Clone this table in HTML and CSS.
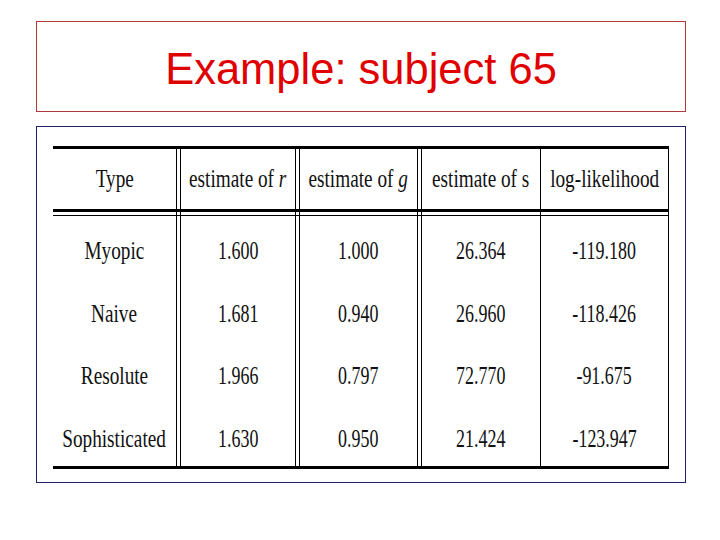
FILE: index.html
```html
<!DOCTYPE html>
<html>
<head>
<meta charset="utf-8">
<link rel="stylesheet" href="styles.css">
</head>
<body>
<div class="page">
  <div class="title-box"><h1 class="title">Example: subject 65</h1></div>
  <div class="frame">
    <div class="tbl">
      <div class="row head">
        <div class="cell c1"><span class="t">Type</span></div>
        <div class="cell c2"><span class="t">estimate of <i>r</i></span></div>
        <div class="cell c3"><span class="t">estimate of <i>g</i></span></div>
        <div class="cell c4"><span class="t">estimate of s</span></div>
        <div class="cell c5"><span class="t">log-likelihood</span></div>
      </div>
      <div class="rule"></div>
      <div class="row body">
        <div class="cell c1"><span class="t">Myopic</span></div>
        <div class="cell c2"><span class="n">1.600</span></div>
        <div class="cell c3"><span class="n">1.000</span></div>
        <div class="cell c4"><span class="n">26.364</span></div>
        <div class="cell c5"><span class="n">-119.180</span></div>
      </div>
      <div class="row body">
        <div class="cell c1"><span class="t">Naive</span></div>
        <div class="cell c2"><span class="n">1.681</span></div>
        <div class="cell c3"><span class="n">0.940</span></div>
        <div class="cell c4"><span class="n">26.960</span></div>
        <div class="cell c5"><span class="n">-118.426</span></div>
      </div>
      <div class="row body">
        <div class="cell c1"><span class="t">Resolute</span></div>
        <div class="cell c2"><span class="n">1.966</span></div>
        <div class="cell c3"><span class="n">0.797</span></div>
        <div class="cell c4"><span class="n">72.770</span></div>
        <div class="cell c5"><span class="n">-91.675</span></div>
      </div>
      <div class="row body">
        <div class="cell c1"><span class="t">Sophisticated</span></div>
        <div class="cell c2"><span class="n">1.630</span></div>
        <div class="cell c3"><span class="n">0.950</span></div>
        <div class="cell c4"><span class="n">21.424</span></div>
        <div class="cell c5"><span class="n">-123.947</span></div>
      </div>
    </div>
  </div>
</div>
</body>
</html>
```
FILE: styles.css
```css
html, body {
  margin: 0;
  padding: 0;
  background: #ffffff;
}
.page {
  padding: 21px 0 0 36px;
}
.title-box {
  box-sizing: border-box;
  width: 650px;
  height: 91px;
  border: 1px solid #b03a3a;
  display: flex;
  align-items: center;
  justify-content: center;
  padding-top: 4px;
}
.title {
  margin: 0;
  font-family: "Liberation Sans", Arial, sans-serif;
  font-weight: normal;
  font-size: 43.5px;
  line-height: 50px;
  color: #e00000;
}
.frame {
  box-sizing: border-box;
  width: 650px;
  margin-top: 14px;
  border: 1px solid #1f1f6a;
  padding: 19px 0 13px 16px;
}
.tbl {
  width: 616px;
  border-top: 3px solid #000;
  border-bottom: 3px solid #000;
  background-image:
    linear-gradient(#000, #000), linear-gradient(#000, #000),
    linear-gradient(#000, #000), linear-gradient(#000, #000),
    linear-gradient(#000, #000), linear-gradient(#000, #000),
    linear-gradient(#000, #000), linear-gradient(#000, #000);
  background-repeat: no-repeat;
  background-size: 1px 100%;
  background-position: 123px 0, 127px 0, 242px 0, 246px 0, 364px 0, 368px 0, 487px 0, 615px 0;
  font-family: "Liberation Serif", "Times New Roman", serif;
  font-size: 26px;
  color: #111;
}
.row {
  display: grid;
  grid-template-columns: 123px 5px 114px 5px 117px 5px 118px 1px 127px 1px;
  align-items: center;
}
.head {
  height: 60px;
}
.body {
  box-sizing: border-box;
  height: 62.5px;
  padding-top: 8px;
}
.rule {
  height: 3px;
  border-top: 3px solid #000;
  border-bottom: 1px solid #000;
}
.cell {
  display: flex;
  justify-content: center;
  white-space: nowrap;
  line-height: 30px;
}
.c1 { grid-column: 1; }
.c2 { grid-column: 3; }
.c3 { grid-column: 5; }
.c4 { grid-column: 7; }
.c5 { grid-column: 9; }
.t {
  flex: none;
  display: inline-block;
  transform: scaleX(0.74);
}
.n {
  flex: none;
  display: inline-block;
  transform: scaleX(0.69);
}
```
